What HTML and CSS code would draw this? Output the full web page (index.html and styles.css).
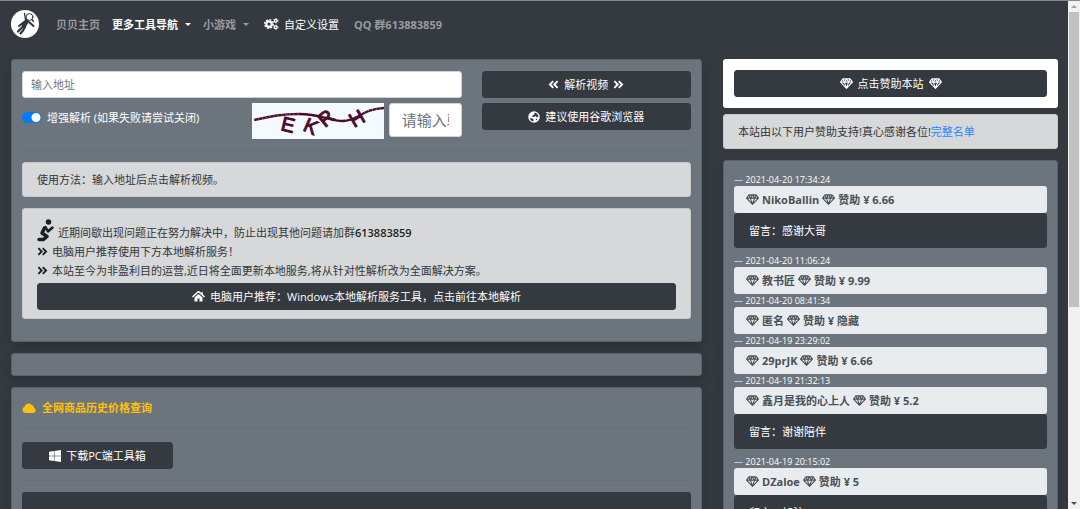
FILE: index.html
```html
<!DOCTYPE html>
<html lang="zh-CN">
<head>
<meta charset="utf-8">
<meta name="viewport" content="width=device-width, initial-scale=1">
<title>贝贝主页</title>
<link rel="stylesheet" href="styles.css">
</head>
<body>
<svg class="defs" aria-hidden="true">
  <symbol id="gem" viewBox="0 0 24 20"><path d="M5.5 1.5h13l4.5 6L12 19 1 7.500zM1 7.500h22M5.500 1.500l2.500 6 4 11 4-11 2.500-6M8 7.500l4-6 4 6" fill="none" stroke="currentColor" stroke-width="2" stroke-linejoin="round"/></symbol>
  <symbol id="right" viewBox="0 0 20 16"><path d="M2.500 2l6 6-6 6M10.500 2l6 6-6 6" fill="none" stroke="currentColor" stroke-width="3.400"/></symbol>
  <symbol id="left" viewBox="0 0 20 16"><path d="M9.500 2l-6 6 6 6M17.500 2l-6 6 6 6" fill="none" stroke="currentColor" stroke-width="3.400"/></symbol>
</svg>
<div class="viewport">
  <div class="page">
    <nav class="navbar">
      <a class="brand" href="#" aria-label="首页"><svg viewBox="0 0 28 28"><circle cx="14" cy="14" r="14" fill="#fff"/><g fill="none" stroke="#30353c" stroke-linecap="round" stroke-linejoin="round"><circle cx="18.500" cy="7" r="3.400" stroke-width="1"/><path d="M15.500 11.500l-2.500 4" stroke-width="4.500"/><path d="M13 12l-5 4M18 12l4.500 4" stroke-width="2"/><path d="M11.500 17l-4.500 4.500M14 17l-2 3.500-2.500 3" stroke-width="2.200"/><path d="M14.500 10L13.500 3.500M21 9.500l1.500 2" stroke-width="1.300"/></g></svg></a>
      <a class="nav-link" href="#">贝贝主页</a>
      <a class="nav-link active caret" href="#">更多工具导航</a>
      <a class="nav-link caret" href="#">小游戏</a>
      <a class="nav-link settings" href="#"><svg class="cogs" viewBox="0 0 30 24"><g fill="none" stroke="currentColor"><circle cx="10" cy="12" r="5.500" stroke-width="4.500"/><circle cx="10" cy="12" r="8.700" stroke-width="2.600" stroke-dasharray="3.800 3"/><circle cx="23.500" cy="5.500" r="2.600" stroke-width="2.400"/><circle cx="23.500" cy="5.500" r="4.400" stroke-width="1.800" stroke-dasharray="2.400 2.200"/><circle cx="23.500" cy="18.500" r="2.600" stroke-width="2.400"/><circle cx="23.500" cy="18.500" r="4.400" stroke-width="1.800" stroke-dasharray="2.400 2.200"/></g></svg>自定义设置</a>
      <a class="nav-link" href="#">QQ 群613883859</a>
    </nav>
    <div class="columns">
      <main class="column">
        <section class="card tool">
          <form class="parse">
            <div class="fields">
              <input class="address" type="text" placeholder="输入地址" aria-label="输入地址">
              <div class="options">
                <label class="switch"><input type="checkbox" checked><span>增强解析 (如果失败请尝试关闭)</span></label>
                <svg class="captcha" viewBox="0 0 132 36" role="img" aria-label="验证码"><path d="M2 17C20 13 30 11 47 11C68 11 78 18 91 18C106 18 110 6 132 5" fill="none" stroke="#4d0b2b" stroke-width="2.400"/><path d="M2 17C20 13 30 11 47 11M98 16C108 12 114 6 132 5" fill="none" stroke="#a9879b" stroke-width="1" stroke-dasharray="1 3"/><g class="letters"><text transform="translate(28 27) rotate(13)">E</text><text transform="translate(50 27) rotate(24)">K</text><text transform="translate(73 25) rotate(-40)">R</text><text transform="translate(102 25) rotate(-30)">H</text></g></svg>
                <input class="code" type="text" placeholder="请输入验证码" aria-label="请输入验证码">
              </div>
            </div>
            <div class="actions">
              <button class="btn" type="button"><svg class="chev"><use href="#left"/></svg>解析视频<svg class="chev"><use href="#right"/></svg></button>
              <button class="btn" type="button"><svg class="globe" viewBox="0 0 24 24"><circle cx="12" cy="12" r="11.500" fill="#fff"/><path d="M13 3l5 2 3 6-3 2-3-3-3 2-4-1 2-3 3-1zM4 14l5 1 3 3-3 3-4-3zM15 16l4-1-2 4z" fill="#343a40"/></svg>建议使用谷歌浏览器</button>
            </div>
          </form>
          <hr>
          <div class="alert light">使用方法：输入地址后点击解析视频。</div>
          <div class="alert light notice">
            <p><svg class="pray" viewBox="0 0 34 46"><circle cx="23" cy="6" r="5.500" fill="#1b1e21"/><path d="M15 18l-5 10 10 7-7 6H4" fill="none" stroke="#1b1e21" stroke-width="7" stroke-linejoin="round" stroke-linecap="round"/><path d="M17 16l5 9 9-8" fill="none" stroke="#1b1e21" stroke-width="5" stroke-linejoin="round" stroke-linecap="round"/></svg>近期间歇出现问题正在努力解决中，防止出现其他问题请加群<strong>613883859</strong></p>
            <p><svg class="chev dark"><use href="#right"/></svg>电脑用户推荐使用下方本地解析服务！</p>
            <p><svg class="chev dark"><use href="#right"/></svg>本站至今为非盈利目的运营,近日将全面更新本地服务,将从针对性解析改为全面解决方案。</p>
            <button class="btn" type="button"><svg class="home" viewBox="0 0 26 22"><path d="M1 12L13 1l12 11M20 2v6" fill="none" stroke="#fff" stroke-width="3"/><path d="M13 6l8 7v8h-6v-6h-4v6H5v-8z" fill="#fff"/></svg>电脑用户推荐：Windows本地解析服务工具，点击前往本地解析</button>
          </div>
        </section>
        <section class="card empty"></section>
        <section class="card shop">
          <h2><svg class="cloud" viewBox="0 0 28 20"><path d="M7 20a6.500 6.500 0 0 1-2-12.500A8 8 0 0 1 19 4a5 5 0 0 1 5 6 5.200 5.200 0 0 1-1 10z" fill="currentColor"/></svg>全网商品历史价格查询</h2>
          <hr>
          <button class="btn download" type="button"><svg class="win" viewBox="0 0 22 22"><path d="M0 3l9-1v8.500H0zM10 2l12-2v10.500H10zM0 11.500h9V20l-9-1zM10 11.500h12V22l-12-2z" fill="#fff"/></svg>下载PC端工具箱</button>
          <hr class="second">
          <div class="panel"></div>
        </section>
      </main>
      <aside class="column">
        <div class="support"><button class="btn" type="button"><svg class="gem"><use href="#gem"/></svg>点击赞助本站<svg class="gem"><use href="#gem"/></svg></button></div>
        <div class="alert light thanks">本站由以下用户赞助支持!真心感谢各位!<a href="#">完整名单</a></div>
        <section class="card donors">
          <article><time>— 2021-04-20 17:34:24</time><div class="donor"><svg class="gem"><use href="#gem"/></svg>NikoBallin<svg class="gem"><use href="#gem"/></svg>赞助 ¥ 6.66</div><p class="message">留言：感谢大哥</p></article>
          <article><time>— 2021-04-20 11:06:24</time><div class="donor"><svg class="gem"><use href="#gem"/></svg>教书匠<svg class="gem"><use href="#gem"/></svg>赞助 ¥ 9.99</div></article>
          <article><time>— 2021-04-20 08:41:34</time><div class="donor"><svg class="gem"><use href="#gem"/></svg>匿名<svg class="gem"><use href="#gem"/></svg>赞助 ¥ 隐藏</div></article>
          <article><time>— 2021-04-19 23:29:02</time><div class="donor"><svg class="gem"><use href="#gem"/></svg>29prJK<svg class="gem"><use href="#gem"/></svg>赞助 ¥ 6.66</div></article>
          <article><time>— 2021-04-19 21:32:13</time><div class="donor"><svg class="gem"><use href="#gem"/></svg>鑫月是我的心上人<svg class="gem"><use href="#gem"/></svg>赞助 ¥ 5.2</div><p class="message">留言：谢谢陪伴</p></article>
          <article><time>— 2021-04-19 20:15:02</time><div class="donor"><svg class="gem"><use href="#gem"/></svg>DZaloe<svg class="gem"><use href="#gem"/></svg>赞助 ¥ 5</div><p class="message">留言：加油</p></article>
        </section>
      </aside>
    </div>
  </div>
  <div class="scrollbar" aria-hidden="true"><span class="arrow up"></span><span class="thumb"></span><span class="arrow down"></span></div>
</div>
</body>
</html>
```
FILE: styles.css
```css
* { box-sizing: border-box; }
body { margin: 0; background: #343a40; color: #fff; font: 11px/17px "Open Sans", "Noto Sans CJK SC", sans-serif; }
button, input { font: inherit; }
a { text-decoration: none; }
p, h2 { margin: 0; }
svg { flex: none; }
.defs { position: absolute; width: 0; height: 0; }
.viewport { display: flex; height: 100vh; overflow: hidden; border-top: 1px solid #868b90; }
.page { flex: 1; min-width: 0; }
.navbar { display: flex; align-items: center; height: 46px; padding: 0 11px; }
.brand { margin-right: 17px; }
.brand svg { display: block; width: 28px; height: 28px; }
.nav-link { display: flex; align-items: center; margin-right: 12px; color: #999c9f; font-weight: 700; }
.nav-link.active { color: #fff; }
.nav-link.settings { color: #fff; font-weight: 400; margin: 0 15px 0 3px; }
.caret::after { content: ""; margin-left: 7px; border: 3px solid transparent; border-top-color: currentColor; border-bottom: 0; }
.cogs { width: 15px; height: 12px; margin-right: 5px; }
.columns { display: grid; grid-template-columns: minmax(0, 691fr) minmax(0, 335fr); gap: 21px; padding: 12px 10px 0 11px; }
.card { margin-bottom: 11px; padding: 11px 10px; background: #6c757d; border: 1px solid #596169; border-radius: 3px; box-shadow: 0 6px 12px rgba(0, 0, 0, .15); }
.parse { display: grid; grid-template-columns: minmax(0, 439fr) minmax(0, 209fr); gap: 20px; }
.fields, .actions { display: flex; flex-direction: column; gap: 5px; }
.address, .code { width: 100%; border: 1px solid #ced4da; border-radius: 3px; background: #fff; }
.address { height: 27px; padding: 0 8px; }
::placeholder { color: #6c757d; opacity: 1; }
.options { display: flex; align-items: flex-start; }
.switch { display: flex; align-items: center; gap: 6px; margin: 6px auto 0 0; }
.switch input { appearance: none; width: 19px; height: 11px; margin: 0; border-radius: 6px; background: radial-gradient(circle at 14px 50%, #fff 4px, transparent 5px) #007bff; }
.captcha { width: 132px; height: 36px; margin-right: 5px; background: #f3fbfe; }
.letters { fill: #4d0b2b; stroke: #4d0b2b; font: 20px "Liberation Sans", sans-serif; }
.code { width: 73px; height: 34px; padding: 0 12px; font-size: 15px; }
.btn { display: flex; align-items: center; justify-content: center; gap: 5px; width: 100%; height: 27px; padding: 0; border: 1px solid #343a40; border-radius: 3px; background: #343a40; color: #fff; }
.chev { width: 11px; height: 9px; }
.globe, .win { width: 12px; height: 12px; }
.home { width: 13px; height: 11px; }
hr { width: 100%; margin: 11px 0; border: 0; border-top: 1px solid #656d75; }
.alert { margin-bottom: 11px; padding: 8px 14px; border: 1px solid #c6c8ca; border-radius: 3px; }
.light { background: #d6d8d9; color: #333638; }
.notice { padding-top: 10px; }
.notice p { display: flex; align-items: center; gap: 4px; line-height: 19px; }
.notice p:first-child { align-items: flex-end; }
.notice strong { color: #1b1e21; margin-left: -4px; font-weight: 600; }
.pray { width: 17px; height: 23px; }
.dark { color: #1b1e21; }
.notice .btn { margin-top: 3px; }
.empty { height: 23px; padding: 0; }
.shop h2 { display: flex; align-items: center; gap: 6px; color: #ffc107; font-size: 11px; line-height: 17px; }
.cloud { width: 14px; height: 10px; }
.download { width: 151px; }
.shop hr { margin: 11px 0 14px; }
.shop .second { margin: 11px 0; }
.panel { height: 80px; background: #343a40; border-radius: 3px; }
.support { margin-bottom: 6px; padding: 11px; border-radius: 3px; background: #fff; }
.gem { width: 13px; height: 11px; }
.thanks a { color: #1e88ff; }
.donors { padding-top: 12px; }
.donors time { display: block; font-size: 9px; line-height: 13px; }
.donor { display: flex; align-items: center; gap: 3px; height: 27px; padding: 0 12px; border-radius: 3px; background: #e9ecef; color: #495057; font-weight: 700; }
.message { margin-bottom: 6px; padding: 8px 14px; border: 1px solid #343a40; border-radius: 3px; background: #343a40; }
.scrollbar { display: flex; flex-direction: column; align-items: center; width: 12px; background: #f1f1f1; }
.thumb { width: 10px; height: 58%; background: #c1c1c1; }
.arrow { margin: 4px 0; border: 3px solid transparent; }
.up { border-bottom-color: #a3a3a3; border-top: 0; }
.down { margin-top: auto; border-top-color: #505050; border-bottom: 0; }
```
